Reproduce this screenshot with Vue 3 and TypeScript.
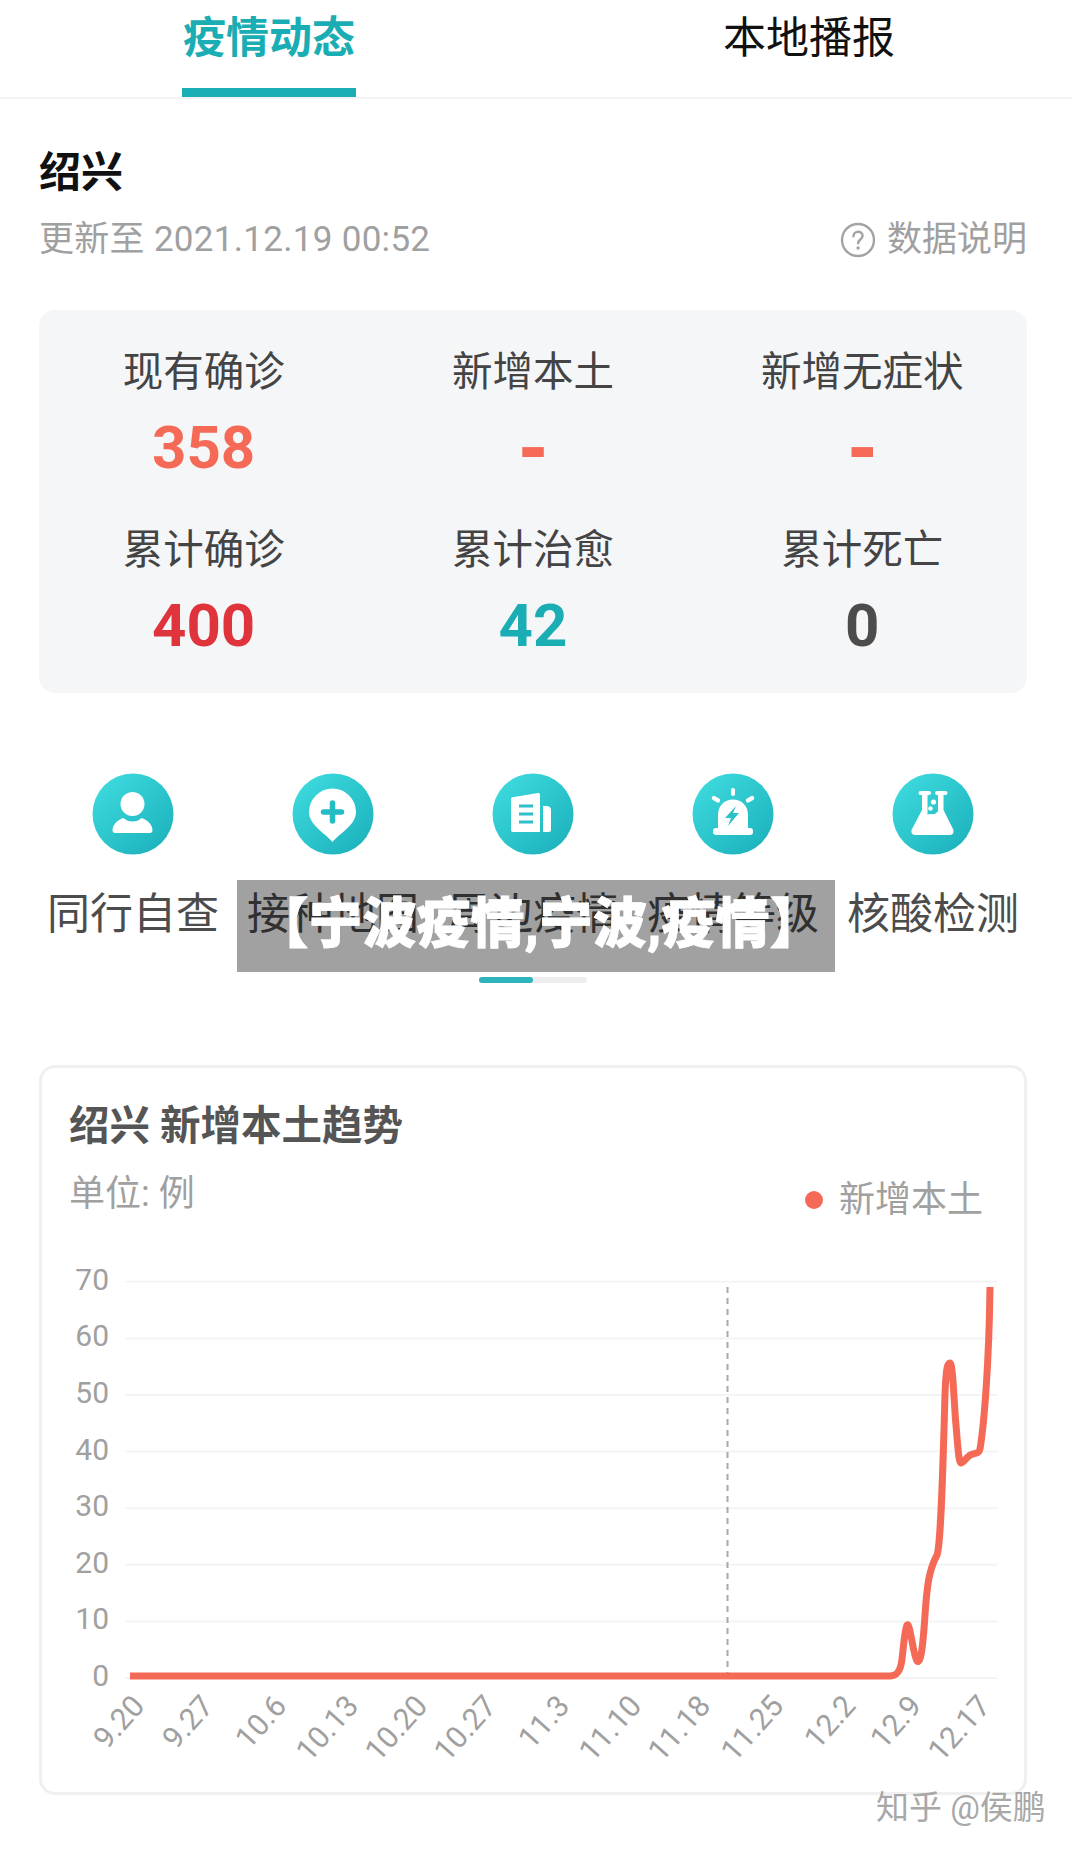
<script setup lang="ts">
const stats = [
  { label: '现有确诊', value: '358', cls: 'orange' },
  { label: '新增本土', value: '-', cls: 'orange dash' },
  { label: '新增无症状', value: '-', cls: 'orange dash' },
  { label: '累计确诊', value: '400', cls: 'red' },
  { label: '累计治愈', value: '42', cls: 'teal' },
  { label: '累计死亡', value: '0', cls: 'dark' },
];

const entries = ['同行自查', '接种地图', '周边疫情', '疫情等级', '核酸检测'];

const yLabels = [70, 60, 50, 40, 30, 20, 10, 0];
const yOf = (v: number) => 613 - (v / 10) * 56.6;

const xLabels = [
  { text: '9.20', x: 145 },
  { text: '9.27', x: 214 },
  { text: '10.6', x: 287 },
  { text: '10.13', x: 359 },
  { text: '10.20', x: 428 },
  { text: '10.27', x: 497 },
  { text: '11.3', x: 570 },
  { text: '11.10', x: 642 },
  { text: '11.18', x: 711 },
  { text: '11.25', x: 784 },
  { text: '12.2', x: 856 },
  { text: '12.9', x: 922 },
  { text: '12.17', x: 991 },
];

// svg origin is the card's top-left corner on the page (39, 1065)
const curve =
  'M91 611 L851 611 C857 611 860 608 862 600 C864 592 865 566 868 560 ' +
  'C871 556 874 590 878 596 C882 600 884 580 886 550 C888 520 890 505 898 490 ' +
  'C902 480 904 400 906 330 C907 300 909 298 911 298 C914 298 915 340 917 360 ' +
  'C919 385 920 398 922 398 C925 398 928 390 934 389 C938 388 940 388 941 384 ' +
  'C945 360 950 300 951 222';
</script>

<template>
  <div class="page">
    <header class="tabs">
      <div class="tab active">疫情动态</div>
      <div class="tab">本地播报</div>
    </header>

    <section class="head">
      <h1>绍兴</h1>
      <div class="sub">
        <span class="updated">更新至 2021.12.19 00:52</span>
        <span class="explain">
          <svg width="36" height="36" viewBox="0 0 36 36" fill="none">
            <circle cx="18" cy="18" r="16" stroke="#a3a3a3" stroke-width="2.4" />
            <path d="M13.5 14.2c0-2.600 2-4.400 4.600-4.400s4.500 1.700 4.500 4c0 3.600-4.500 3.800-4.500 7.400" stroke="#a3a3a3" stroke-width="2.4" stroke-linecap="round" />
            <circle cx="18.100" cy="26" r="1.700" fill="#a3a3a3" />
          </svg>
          数据说明
        </span>
      </div>
    </section>

    <section class="panel">
      <div v-for="s in stats" :key="s.label" class="stat">
        <div class="stat-label">{{ s.label }}</div>
        <div class="stat-value" :class="s.cls">{{ s.value }}</div>
      </div>
    </section>

    <section class="entries">
      <div v-for="(name, i) in entries" :key="name" class="entry">
        <svg class="entry-icon" width="82" height="82" viewBox="0 0 82 82">
          <defs>
            <linearGradient :id="'g' + i" x1="0.15" y1="0.1" x2="0.85" y2="0.9">
              <stop offset="0" stop-color="#3bd8dc" />
              <stop offset="1" stop-color="#1eb4be" />
            </linearGradient>
          </defs>
          <circle cx="41" cy="41" r="40.500" :fill="'url(#g' + i + ')'" />
          <g v-if="i === 0" fill="#fff">
            <circle cx="40.500" cy="31" r="12" />
            <path d="M23 60c-1.500 0-2.500-1-2.500-2.500 0-6 5-10.500 11-12.500 2.500 2.500 5.500 3.500 9 3.500s6.500-1 9-3.500c6 2 11 6.500 11 12.500 0 1.500-1 2.500-2.500 2.500z" />
          </g>
          <g v-else-if="i === 1">
            <path fill="#fff" d="M40.500 69C33 60 17 52 17 39A23.500 23.500 0 0 1 64 39C64 52 48 60 40.500 69z" />
            <path stroke="#25bcc5" stroke-width="5.500" stroke-linecap="round" d="M40.500 30v18M31.500 39h18" />
          </g>
          <g v-else-if="i === 2" fill="#fff">
            <path d="M19 26c0-1 .5-1.500 1.500-1.700L46 20c1.200-.2 2 .5 2 1.700V59H21c-1.200 0-2-.8-2-2z" />
            <path d="M51 33h3.500c3 0 4.500 1.500 4.500 4.500V57c0 1.200-.8 2-2 2H51z" />
            <path stroke="#2cc0c8" stroke-width="3" d="M27 33h14M27 41h14M27 49h14" />
          </g>
          <g v-else-if="i === 3" fill="#fff">
            <rect x="39" y="15" width="4" height="8" rx="2" />
            <rect x="19.500" y="24" width="9" height="4.500" rx="2.200" transform="rotate(30 24 26.200)" />
            <rect x="53.500" y="24" width="9" height="4.500" rx="2.200" transform="rotate(-30 58 26.200)" />
            <path d="M26 56V42c0-9 6-15.500 15-15.500S56 33 56 42v14z" />
            <rect x="21" y="55" width="40" height="7" rx="3" />
            <path fill="#2cc0c8" d="M44 33 33 45h6l-3 8 11-13h-6z" />
          </g>
          <g v-else fill="#fff">
            <path d="M28.500 18H37a2 2 0 0 1 0 4h-1.500V42C38 39 42 44 46 38V22h-1a2 2 0 0 1 0-4h8.500a2 2 0 0 1 0 4H51.500V37L61 56c1.500 3 0 6-3 6H23c-3 0-4.500-3-3-6L30 37V22h-1.500a2 2 0 0 1 0-4z" />
            <circle cx="41.500" cy="29" r="2.600" />
            <circle cx="38.500" cy="35.500" r="2.300" />
          </g>
        </svg>
        <div class="entry-name">{{ name }}</div>
      </div>
    </section>

    <div class="pager"><span class="pager-fill"></span></div>

    <section class="card">
      <h2>绍兴 新增本土趋势</h2>
      <div class="card-meta">
        <span>单位: 例</span>
        <span class="legend"><i class="dot"></i>新增本土</span>
      </div>
      <svg class="chart" width="988" height="730" viewBox="0 0 988 730">
        <g v-for="v in yLabels" :key="v">
          <line x1="86" x2="958" :y1="yOf(v)" :y2="yOf(v)" stroke="#f4f4f4" stroke-width="2" />
          <text x="70" :y="yOf(v) + 8" text-anchor="end" class="axis">{{ v }}</text>
        </g>
        <line x1="688.500" x2="688.500" y1="222" y2="613" stroke="#a8a8a8" stroke-width="2" stroke-dasharray="6 5" />
        <path :d="curve" fill="none" stroke="#f46a56" stroke-width="7" stroke-linejoin="round" />
        <text
          v-for="l in xLabels"
          :key="l.text"
          class="axis"
          text-anchor="end"
          :transform="`translate(${l.x - 38} 642) rotate(-48)`"
        >{{ l.text }}</text>
      </svg>
    </section>

    <div class="overlay">【宁波疫情,宁波,疫情】</div>
    <div class="watermark">知乎 @侯鹏</div>
  </div>
</template>

<style scoped>
.page {
  position: relative;
  width: 1072px;
  height: 1852px;
  overflow: hidden;
  background: #fff;
  font-family: Roboto, "Noto Sans CJK SC", sans-serif;
  color: #333;
}

.tabs {
  display: flex;
  height: 97px;
  border-bottom: 2px solid #f3f3f3;
  box-sizing: content-box;
  padding-left: 182px;
  gap: 366px;
}

.tab {
  height: 97px;
  width: 174px;
  font-size: 43px;
  line-height: 76px;
  color: #111;
  white-space: nowrap;
  text-align: center;
}

.tab.active {
  color: #1aadb3;
  font-weight: 700;
  border-bottom: 9px solid #1aadb3;
  box-sizing: border-box;
}

.head {
  padding: 50px 45px 0 39px;
}

h1 {
  margin: 0;
  font-size: 42px;
  line-height: 48px;
  font-weight: 700;
  color: #111;
}

.sub {
  display: flex;
  justify-content: space-between;
  align-items: center;
  margin-top: 21px;
  font-size: 35px;
  line-height: 44px;
  color: #a0a0a0;
}

.updated {
  letter-spacing: 0.3px;
}

.explain {
  display: flex;
  align-items: center;
  gap: 11px;
}

.panel {
  display: grid;
  grid-template-columns: repeat(3, 1fr);
  grid-auto-rows: 178px;
  width: 988px;
  height: 383px;
  margin: 48px 0 0 39px;
  padding-top: 34px;
  box-sizing: border-box;
  background: #f5f6f8;
  border-radius: 16px;
}

.stat {
  text-align: center;
}

.stat-label {
  font-size: 40.5px;
  line-height: 56px;
  color: #444;
}

.stat-value {
  margin-top: 10px;
  font-size: 60px;
  line-height: 76px;
  font-weight: 700;
}

.stat-value.dash {
  font-family: "DejaVu Sans", sans-serif;
  font-size: 70px;
}

.orange { color: #f46a56; }
.red { color: #e0343c; }
.teal { color: #1aadb3; }
.dark { color: #4c4c4c; }

.entries {
  display: grid;
  grid-template-columns: repeat(5, 200px);
  margin: 80px 0 0 33px;
}

.entry {
  display: flex;
  flex-direction: column;
  align-items: center;
}

.entry-name {
  margin-top: 30px;
  font-size: 43px;
  line-height: 58px;
  color: #4c4c4c;
  white-space: nowrap;
}

.pager {
  width: 108px;
  height: 6px;
  margin: 34px 0 0 479px;
  border-radius: 3px;
  background: #eee;
}

.pager-fill {
  display: block;
  width: 54px;
  height: 6px;
  border-radius: 3px;
  background: #2fb4bd;
}

.card {
  position: relative;
  width: 988px;
  height: 730px;
  margin: 82px 0 0 39px;
  padding: 30px 41px 0 27px;
  box-sizing: border-box;
  border: 3px solid #f0f0f0;
  border-radius: 16px;
}

h2 {
  margin: 0;
  font-size: 40.5px;
  line-height: 56px;
  font-weight: 700;
  color: #555;
}

.card-meta {
  display: flex;
  justify-content: space-between;
  margin-top: 16px;
  font-size: 36px;
  line-height: 48px;
  color: #a0a0a0;
}

.legend {
  display: flex;
  align-items: center;
  font-size: 36px;
  margin-top: 6px;
}

.dot {
  width: 18px;
  height: 18px;
  margin-right: 16px;
  border-radius: 50%;
  background: #f46a56;
}

.chart {
  position: absolute;
  left: -3px;
  top: -3px;
}

.axis {
  font-size: 30px;
  fill: #a0a0a0;
}

.overlay {
  position: absolute;
  left: 237px;
  top: 880px;
  width: 598px;
  height: 92px;
  padding-left: 6px;
  box-sizing: border-box;
  background: rgba(0, 0, 0, 0.37);
  color: #fff;
  font-size: 54px;
  font-weight: 900;
  line-height: 90px;
  text-align: center;
  white-space: nowrap;
  -webkit-text-stroke: 0.8px #fff;
}

.watermark {
  position: absolute;
  left: 876px;
  top: 1788px;
  font-size: 33px;
  line-height: 40px;
  color: #a8a8a8;
  white-space: nowrap;
  text-shadow: 0 0 2px #fff;
}
</style>
